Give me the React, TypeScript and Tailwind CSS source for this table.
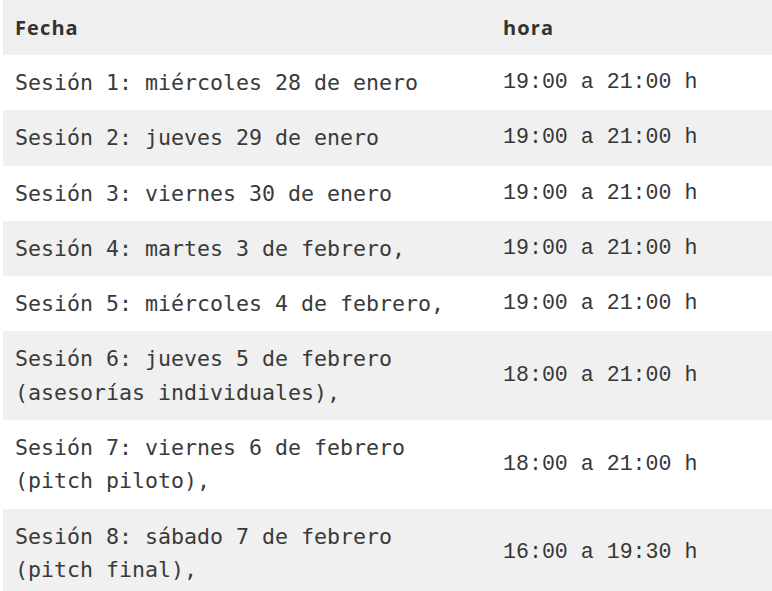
import React from "react";

const rows: { a: string[]; b: string }[] = [
  { a: ["Sesión 1: miércoles 28 de enero"], b: "19:00 a 21:00 h" },
  { a: ["Sesión 2: jueves 29 de enero"], b: "19:00 a 21:00 h" },
  { a: ["Sesión 3: viernes 30 de enero"], b: "19:00 a 21:00 h" },
  { a: ["Sesión 4: martes 3 de febrero,"], b: "19:00 a 21:00 h" },
  { a: ["Sesión 5: miércoles 4 de febrero,"], b: "19:00 a 21:00 h" },
  { a: ["Sesión 6: jueves 5 de febrero", "(asesorías individuales),"], b: "18:00 a 21:00 h" },
  { a: ["Sesión 7: viernes 6 de febrero", "(pitch piloto),"], b: "18:00 a 21:00 h" },
  { a: ["Sesión 8: sábado 7 de febrero", "(pitch final),"], b: "16:00 a 19:30 h" },
];

export default function App() {
  return (
    <div className="w-[772px] h-[591px] overflow-hidden bg-white pl-[3px]">
      <table className="w-[769px] border-collapse text-[#363636]">
        <thead>
          <tr className="bg-[#efefef]">
            <th className="w-[488px] h-[55px] pl-[12px] text-left align-middle font-['Open_Sans',sans-serif] font-bold text-[20px] tracking-[1.1px] text-[#333]">
              Fecha
            </th>
            <th className="h-[55px] pl-[12px] text-left align-middle font-['Open_Sans',sans-serif] font-bold text-[20px] tracking-[1.1px] text-[#333]">
              hora
            </th>
          </tr>
        </thead>
        <tbody>
          {rows.map((r, i) => (
            <tr key={i} className={i % 2 === 1 ? "bg-[#f0f0f0]" : "bg-white"}>
              <td className="pl-[12px] py-[11px] leading-[33.3px] align-middle font-['DejaVu_Sans_Mono',monospace] text-[21.6px] text-[#3a3a3a]">
                {r.a.map((l, j) => (
                  <div key={j} className="whitespace-pre">{l}</div>
                ))}
              </td>
              <td className="pl-[12px] py-[11px] leading-[33.3px] align-middle font-['Liberation_Mono',monospace] text-[21.6px] whitespace-pre">
                {r.b}
              </td>
            </tr>
          ))}
        </tbody>
      </table>
    </div>
  );
}
